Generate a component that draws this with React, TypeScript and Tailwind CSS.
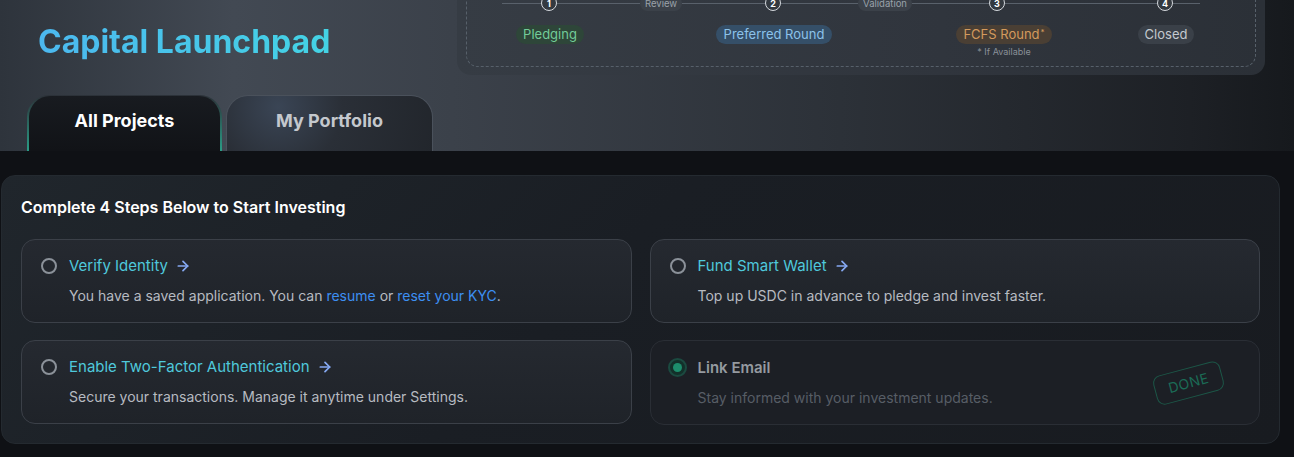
import { ArrowRight } from 'lucide-react'

type Step = {
    title: string
    desc: React.ReactNode
    done?: boolean
}

const steps: Step[] = [
    {
        title: 'Verify Identity',
        desc: (
            <>
                You have a saved application. You can <span className="text-[#3d8ff2]">resume</span> or{' '}
                <span className="text-[#3d8ff2]">reset your KYC</span>.
            </>
        ),
    },
    { title: 'Fund Smart Wallet', desc: 'Top up USDC in advance to pledge and invest faster.' },
    { title: 'Enable Two-Factor Authentication', desc: 'Secure your transactions. Manage it anytime under Settings.' },
    { title: 'Link Email', desc: 'Stay informed with your investment updates.', done: true },
]

function Circle({ n }: { n: number }) {
    return (
        <div className="flex h-4 w-4 shrink-0 items-center justify-center rounded-full border-[1.5px] border-[#d5d9de] bg-[#333940] text-[9px] font-bold leading-none text-white">
            {n}
        </div>
    )
}

function Line({ w }: { w: string }) {
    return <div className={`h-px shrink-0 bg-[#59616b] ${w}`} />
}

function MiniPill({ label }: { label: string }) {
    return (
        <div className="shrink-0 rounded-full bg-[#3b4149] px-[5px] py-px text-[9.5px] leading-[13px] text-[#9aa1a9]">
            {label}
        </div>
    )
}

function Stepper() {
    return (
        <div className="-mt-4 h-[83px] rounded-b-[12px] border-[1.5px] border-dashed border-[#57606a] pt-[10px]">
            <div className="flex items-center pl-[35px]">
                <Line w="w-[39px]" />
                <Circle n={1} />
                <Line w="w-[83px]" />
                <MiniPill label="Review" />
                <Line w="w-[83px]" />
                <Circle n={2} />
                <Line w="w-[77px]" />
                <MiniPill label="Validation" />
                <Line w="w-[77px]" />
                <Circle n={3} />
                <Line w="w-[152px]" />
                <Circle n={4} />
                <Line w="w-[27px]" />
            </div>
            <div className="mt-[14px] flex items-start text-[13px] leading-[19px]">
                <div className="flex w-[166px] items-start justify-center">
                    <span className="rounded-full bg-[#2e4639] px-[7px] text-[#72cc98]">Pledging</span>
                </div>
                <div className="flex w-[282px] items-start justify-center">
                    <span className="rounded-full bg-[#354f68] px-[8px] text-[#8cc2ea]">Preferred Round</span>
                </div>
                <div className="flex w-[178px] flex-col items-center">
                    <span className="rounded-full bg-[#4a3f34] px-[7px] text-[#d39a5d]">
                        FCFS Round<sup className="ml-px text-[8px]">*</sup>
                    </span>
                    <span className="mt-[2px] text-[9px] leading-[12px] text-[#8a9098]">* If Available</span>
                </div>
                <div className="flex w-[146px] items-start justify-center">
                    <span className="rounded-full bg-[#3a4048] px-[7px] text-[#c4c9cf]">Closed</span>
                </div>
            </div>
        </div>
    )
}

function StepCard({ step }: { step: Step }) {
    const done = step.done
    return (
        <div
            className={
                done
                    ? 'flex h-[85px] items-center justify-between rounded-[14px] border border-[#2a2e35] bg-[#1c1f25] pl-[17px] pr-[36px]'
                    : 'flex h-[84px] items-center rounded-[14px] border border-[#3b4048] bg-[linear-gradient(180deg,#252930_0%,#1f2329_100%)] pl-[19px]'
            }
        >
            <div className="flex flex-col">
                <div className="flex items-center">
                    {done ? (
                        <div className="flex h-[19px] w-[19px] items-center justify-center rounded-full border-2 border-[#1b4a40] bg-[#13302a]">
                            <div className="h-[9px] w-[9px] rounded-full bg-[#1d8d6c]" />
                        </div>
                    ) : (
                        <div className="h-4 w-4 rounded-full border-2 border-[#8b9199]" />
                    )}
                    <span
                        className={
                            done
                                ? 'ml-[11px] text-[15px] font-semibold leading-5 text-[#959aa0]'
                                : 'ml-3 text-[15px] leading-5 text-[#4fc9dc]'
                        }
                    >
                        {step.title}
                    </span>
                    {!done && <ArrowRight className="ml-[7px] h-4 w-4 text-[#86a9f3]" strokeWidth={2.6} />}
                </div>
                <p className={done ? 'ml-[30px] mt-[10px] text-[14px] leading-5 text-[#575d65]' : 'ml-7 mt-[10px] text-[14px] leading-5 text-[#b7bbc1]'}>
                    {step.desc}
                </p>
            </div>
            {done && (
                <div className="-rotate-[15deg] rounded-[8px] border border-[#1c5647] px-[13px] py-[6px] text-[14px] leading-4 tracking-wide text-[#1b6b56]">
                    DONE
                </div>
            )}
        </div>
    )
}

export default function App() {
    return (
        <div className="h-[457px] w-[1294px] overflow-hidden bg-[#0f1115] font-['Inter',sans-serif]">
            <header className="flex h-[151px] bg-[linear-gradient(90deg,#2e343c_0%,#424953_18%,#3b414a_35%,#2c3138_65%,#1d2025_92%,#16191d_100%)]">
                <div className="flex w-[457px] flex-col pl-[27px]">
                    <h1 className="ml-[11px] mt-[24px] bg-[linear-gradient(90deg,#4cb8ef_0%,#40dfe0_100%)] bg-clip-text text-[32px] font-bold leading-9 text-transparent">
                        Capital Launchpad
                    </h1>
                    <div className="mt-auto flex gap-1">
                        <div className="rounded-t-[22px] bg-[linear-gradient(180deg,#2c3138_0%,#2a9d86_100%)] px-[2px] pt-px">
                            <div className="flex h-[55px] w-[191px] items-center justify-center rounded-t-[21px] bg-[linear-gradient(180deg,#181b20_0%,#111317_100%)] pb-[6px] text-[18px] font-bold text-white">
                                All Projects
                            </div>
                        </div>
                        <div className="flex h-[56px] w-[207px] items-center justify-center rounded-t-[22px] border border-b-0 border-[#4a515b] bg-[radial-gradient(circle_at_25%_20%,#3a4555_0%,#2a2f37_40%,#22262c_100%)] pb-[6px] text-[18px] font-bold text-[#c4c8cd]">
                            My Portfolio
                        </div>
                    </div>
                </div>
                <div className="h-[75px] w-[808px] overflow-hidden rounded-b-[14px] bg-[linear-gradient(90deg,#363c44_0%,#30353d_60%,#2b3037_100%)] px-[9px] pb-2">
                    <Stepper />
                </div>
            </header>

            <section className="pl-px pt-6">
                <div className="h-[269px] w-[1279px] rounded-[14px] border border-[#242a30] bg-[linear-gradient(135deg,#20262c_0%,#1a1e24_45%,#181b20_100%)] px-[19px] pt-[19px]">
                    <h2 className="text-[16px] font-semibold leading-6 text-white">Complete 4 Steps Below to Start Investing</h2>
                    <div className="mt-5 grid grid-cols-2 gap-x-[18px] gap-y-[17px]">
                        {steps.map((s) => (
                            <StepCard key={s.title} step={s} />
                        ))}
                    </div>
                </div>
            </section>
        </div>
    )
}
